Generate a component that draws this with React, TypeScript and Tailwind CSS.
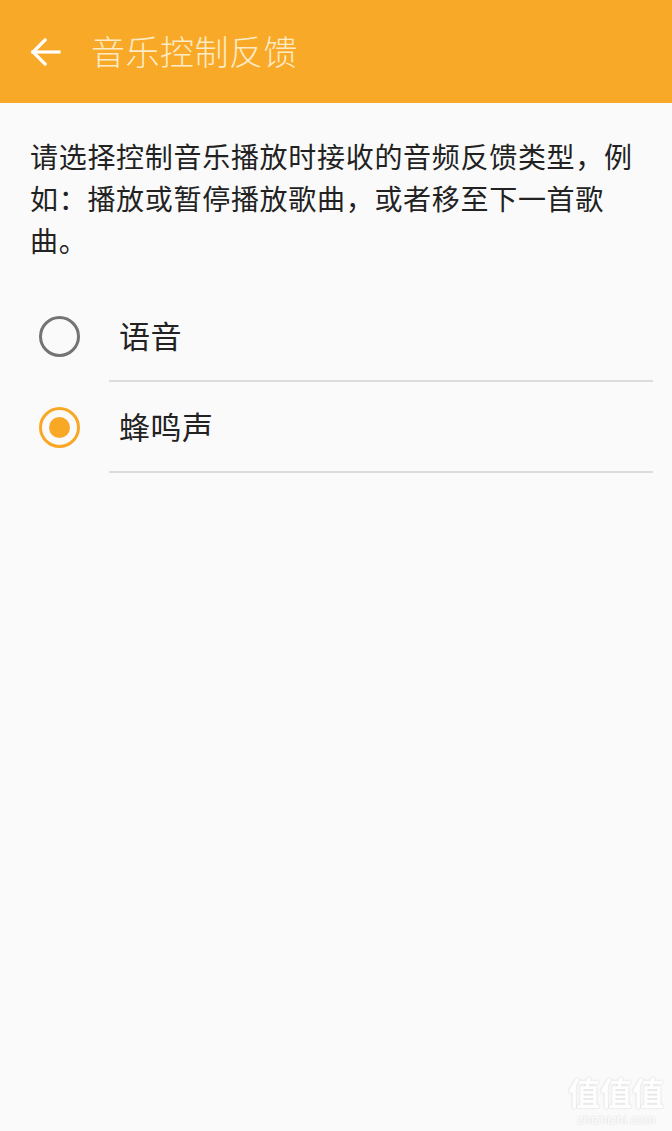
import { useState } from 'react';

const options = [
  { id: 'voice', label: '语音' },
  { id: 'beep', label: '蜂鸣声' },
];

function Radio({ checked }: { checked: boolean }) {
  return (
    <div
      className={`w-[41px] h-[41px] rounded-full border-[3px] flex items-center justify-center ${
        checked ? 'border-[#f9a825]' : 'border-[#747474]'
      }`}
    >
      {checked && <div className="w-[21px] h-[21px] rounded-full bg-[#f9a825]" />}
    </div>
  );
}

export default function App() {
  const [selected, setSelected] = useState('beep');

  return (
    <div
      className="w-[672px] h-[1131px] bg-[#fafafa] flex flex-col relative overflow-hidden"
      style={{ fontFamily: '"Noto Sans CJK SC", "Noto Sans", sans-serif' }}
    >
      <header className="h-[103px] bg-[#f9a928] flex items-center shrink-0">
        <div className="w-[91px] flex items-center pl-[30px]">
          <svg width="32" height="30" viewBox="0 0 32 30" fill="none" stroke="white" strokeWidth="3.2" strokeLinecap="square">
            <path d="M3 15 H29" />
            <path d="M15 3 L3 15 L15 27" strokeLinejoin="miter" />
          </svg>
        </div>
        <h1 className="text-[34px] font-light text-[#fdebc6] leading-none tracking-[0.5px] pb-[2px]">音乐控制反馈</h1>
      </header>

      <p className="pl-[30px] pr-[36px] pt-[32px] text-[28px] leading-[42px] tracking-[0.7px] text-[#222]">
        请选择控制音乐播放时接收的音频反馈类型，例如：播放或暂停播放歌曲，或者移至下一首歌曲。
      </p>

      <div className="mt-[30px] flex flex-col">
        {options.map((o) => (
          <button
            key={o.id}
            onClick={() => setSelected(o.id)}
            className="flex items-stretch h-[91px] text-left"
          >
            <div className="w-[109px] flex items-center pl-[39px]">
              <Radio checked={selected === o.id} />
            </div>
            <div className="flex-1 mr-[19px] border-b-2 border-[#dcdcdc] flex items-center pl-[10px]">
              <span className="text-[31px] text-[#222] tracking-[0.5px]">{o.label}</span>
            </div>
          </button>
        ))}
      </div>

      <div className="absolute right-[8px] bottom-[4px] flex flex-col items-center gap-[6px] text-white [text-shadow:0_0_2px_rgba(0,0,0,0.2)] opacity-90">
        <span className="text-[32px] leading-[32px] font-bold">值值值</span>
        <span className="text-[13px] leading-[14px]" style={{ fontFamily: '"Liberation Sans", sans-serif' }}>zhizhizhi.com</span>
      </div>
    </div>
  );
}
